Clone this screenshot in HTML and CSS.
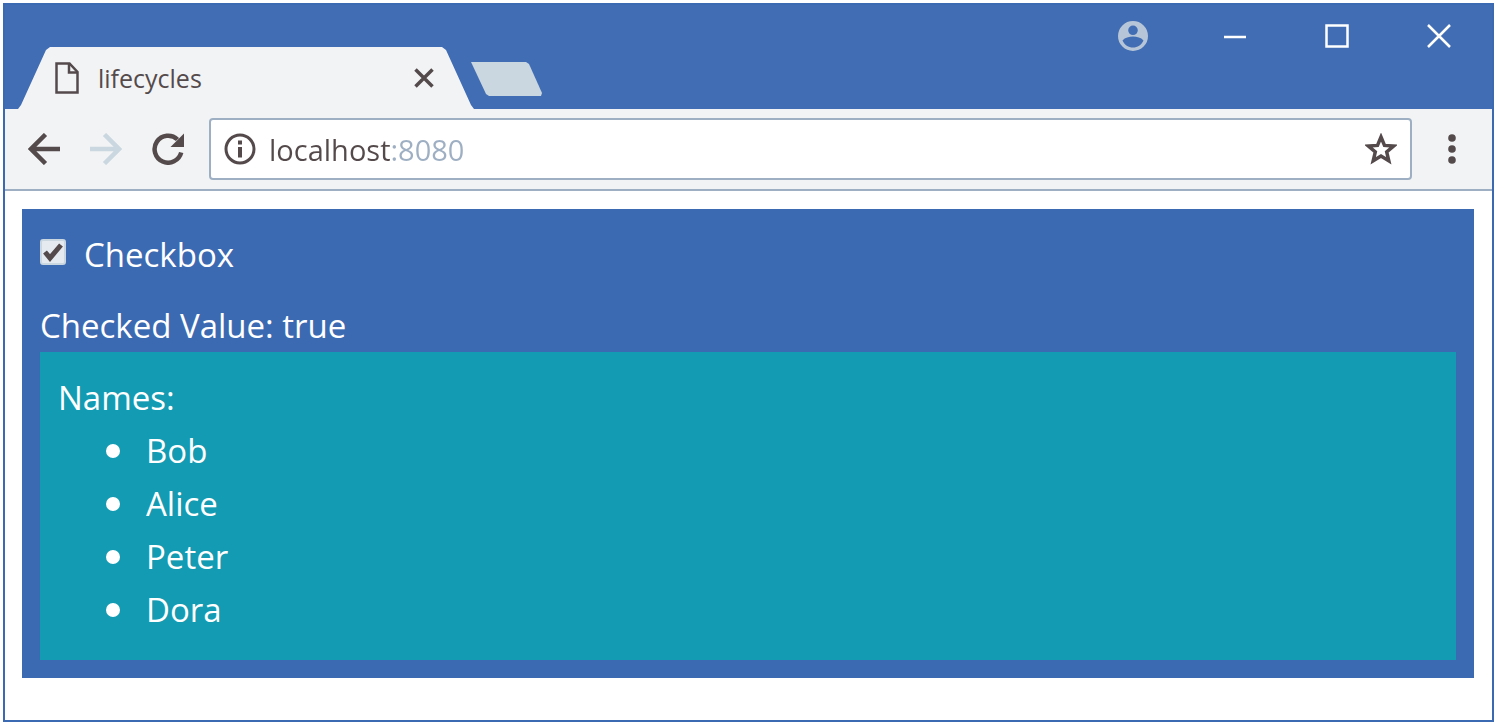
FILE: index.html
```html
<!DOCTYPE html>
<html lang="en">
<head>
<meta charset="utf-8">
<title>lifecycles</title>
<link rel="stylesheet" href="styles.css">
</head>
<body>
<div class="window">
  <header class="titlebar">
    <div class="tabs">
      <div class="tab">
        <svg class="tab-icon" width="26" height="34" viewBox="0 0 26 34" fill="none" stroke="currentColor" stroke-width="2.500"><path d="M2.500 2.500H15.500L23.500 11V31.500H2.500Z"/><path d="M15 3V11.500H23"/></svg>
        <span class="tab-title">lifecycles</span>
        <button class="tab-close" type="button" aria-label="Close tab">
          <svg width="20" height="20" viewBox="0 0 20 20" stroke="currentColor" stroke-width="3.500"><path d="M1.500 1.500L18.500 18.500M18.500 1.500L1.500 18.500"/></svg>
        </button>
      </div>
      <button class="new-tab" type="button" aria-label="New tab"></button>
    </div>
    <div class="controls">
      <button class="control user" type="button" aria-label="Profile">
        <svg width="30" height="30" viewBox="0 0 30 30"><path fill="currentColor" fill-rule="evenodd" d="M15 0a15 15 0 1 0 0 30a15 15 0 1 0 0-30ZM15 4.500a4.800 4.800 0 1 1 0 9.600a4.800 4.800 0 1 1 0-9.600ZM4.500 19.500C7 16.500 11 15.500 15 15.500S23 16.500 25.500 19.500C23.500 24 19.500 26.500 15 26.500S6.500 24 4.500 19.500Z"/></svg>
      </button>
      <button class="control" type="button" aria-label="Minimize">
        <svg width="24" height="24" viewBox="0 0 24 24" stroke="currentColor" stroke-width="2.500"><path d="M1 13H23"/></svg>
      </button>
      <button class="control" type="button" aria-label="Maximize">
        <svg width="24" height="24" viewBox="0 0 24 24" fill="none" stroke="currentColor" stroke-width="2.500"><path d="M1.500 1.500H22.500V22.500H1.500Z"/></svg>
      </button>
      <button class="control" type="button" aria-label="Close">
        <svg width="24" height="24" viewBox="0 0 24 24" stroke="currentColor" stroke-width="2.500"><path d="M1 1L23 23M23 1L1 23"/></svg>
      </button>
    </div>
  </header>
  <nav class="toolbar">
    <button class="tool" type="button" aria-label="Back">
      <svg width="32" height="32" viewBox="0 0 32 32" fill="none" stroke="currentColor" stroke-width="4.500"><path d="M32 16H3M17.500 1.500L3 16L17.500 30.500"/></svg>
    </button>
    <button class="tool" type="button" aria-label="Forward" disabled>
      <svg width="32" height="32" viewBox="0 0 32 32" fill="none" stroke="currentColor" stroke-width="4.500"><path d="M0 16H29M14.500 1.500L29 16L14.500 30.500"/></svg>
    </button>
    <button class="tool" type="button" aria-label="Reload">
      <svg width="32" height="32" viewBox="0 0 32 32"><path d="M29.200 19.500A13.500 13.500 0 1 1 25.500 6.500" fill="none" stroke="currentColor" stroke-width="4.500"/><path d="M32 .5V14H18.500Z" fill="currentColor"/></svg>
    </button>
    <div class="address">
      <button class="info" type="button" aria-label="Site information">
        <svg width="32" height="32" viewBox="0 0 32 32"><circle cx="16" cy="16" r="14" fill="none" stroke="currentColor" stroke-width="3"/><path d="M14 14h4v10.500h-4zM14 7.500h4v4h-4z" fill="currentColor"/></svg>
      </button>
      <input class="url" type="text" value="localhost:8080" aria-label="Address" spellcheck="false">
      <button class="star" type="button" aria-label="Bookmark this page">
        <svg width="32" height="32" viewBox="0 0 32 32" fill="none" stroke="currentColor" stroke-width="3.500"><path d="M16 4L19.500 12.400L28.600 13.100L21.700 19L23.800 27.800L16 23.100L8.200 27.800L10.300 19L3.400 13.100L12.500 12.400Z"/></svg>
      </button>
    </div>
    <button class="menu" type="button" aria-label="Menu">
      <svg width="8" height="32" viewBox="0 0 8 32" fill="currentColor"><circle cx="4" cy="5" r="3.800"/><circle cx="4" cy="16" r="3.800"/><circle cx="4" cy="27" r="3.800"/></svg>
    </button>
  </nav>
  <main class="page">
    <section class="panel">
      <label class="check"><input class="check-box" type="checkbox" checked>Checkbox</label>
      <div>Checked Value: true</div>
      <div class="names">
        Names:
        <ul class="names-list">
          <li>Bob</li>
          <li>Alice</li>
          <li>Peter</li>
          <li>Dora</li>
        </ul>
      </div>
    </section>
  </main>
</div>
</body>
</html>
```

FILE: styles.css
```css
* {
  box-sizing: border-box;
}

:root {
  --blue: #3c6ab2;
  --teal: #129bb2;
  --chrome: #f2f3f5;
  --line: #9eafc3;
  --pale: #cad6e0;
  --ink: #544a4b;
}

body {
  margin: 3px 5px 5px 3px;
  background: #fff;
  font-family: "Open Sans", "Noto Sans", sans-serif;
}

button {
  display: flex;
  align-items: center;
  justify-content: center;
  padding: 0;
  border: 0;
  background: none;
  color: inherit;
  flex: none;
}

.window {
  min-height: calc(100vh - 8px);
  border: 2px solid var(--blue);
}

.titlebar {
  display: flex;
  justify-content: space-between;
  height: 104px;
  background: #406db3;
}

.tabs {
  display: flex;
  align-items: flex-end;
  padding-left: 13px;
}

.tab {
  display: flex;
  align-items: center;
  width: 456px;
  height: 62px;
  padding: 0 40px 0 36px;
  background: var(--chrome);
  color: var(--ink);
  clip-path: polygon(0 100%, 3px 58px, 28px 3px, 32px 0, 424px 0, 428px 3px, 453px 58px, 100% 100%);
}

.tab-title {
  flex: 1;
  margin-left: 18px;
  font-size: 25px;
}

.new-tab {
  align-self: flex-end;
  width: 72px;
  height: 34px;
  margin: 0 0 13px -3px;
  background: var(--pale);
  clip-path: polygon(0 0, 55px 0, 58px 2px, 71px 31px, 70px 100%, 18px 100%, 15px 32px);
}

.controls {
  display: flex;
  height: 62px;
  padding-right: 2px;
  color: #fff;
}

.control {
  width: 102px;
}

.user {
  color: #b7c5d8;
}

.toolbar {
  display: flex;
  align-items: center;
  height: 82px;
  padding-left: 8px;
  background: var(--chrome);
  border-bottom: 2px solid var(--line);
  color: var(--ink);
}

.tool {
  width: 62px;
  height: 62px;
}

.tool:disabled {
  color: var(--pale);
}

.address {
  display: flex;
  flex: 1;
  align-items: center;
  height: 62px;
  margin-left: 10px;
  padding: 0 13px;
  border: 2px solid var(--line);
  border-radius: 4px;
  background: #fff;
}

.url {
  flex: 1;
  min-width: 0;
  margin-left: 13px;
  padding: 0;
  border: 0;
  outline: 0;
  font: 29px "Open Sans", "Noto Sans", sans-serif;
  color: transparent;
  background: linear-gradient(90deg, var(--ink) 121px, var(--line) 121px);
  background-clip: text;
}

.menu {
  width: 80px;
  height: 62px;
}

.page {
  padding: 18px 18px 18px 17px;
}

.panel {
  padding: 19px 18px 18px;
  background: var(--blue);
  color: #fff;
  font-size: 33px;
  line-height: 53px;
}

.check {
  display: flex;
  align-items: center;
  margin-bottom: 18px;
}

.check-box {
  appearance: none;
  width: 26px;
  height: 26px;
  margin: 0 18px 6px 0;
  border: 2px solid var(--pale);
  border-radius: 3px;
  background: #eef2f5;
}

.check-box:checked {
  background: #e4eaf0 url("data:image/svg+xml,%3Csvg xmlns='http://www.w3.org/2000/svg' viewBox='0 0 22 22'%3E%3Cpath d='M3 11L8 17L19 4' fill='none' stroke='%23544a4b' stroke-width='5'/%3E%3C/svg%3E") center / contain no-repeat;
}

.names {
  padding: 19px 18px 24px;
  background: var(--teal);
}

.names-list {
  margin: 0;
  padding-left: 48px;
  list-style: none;
}

.names-list li {
  display: flex;
  align-items: center;
}

.names-list li::before {
  content: "";
  width: 14px;
  height: 14px;
  margin-right: 26px;
  border-radius: 50%;
  background: currentColor;
}
```
